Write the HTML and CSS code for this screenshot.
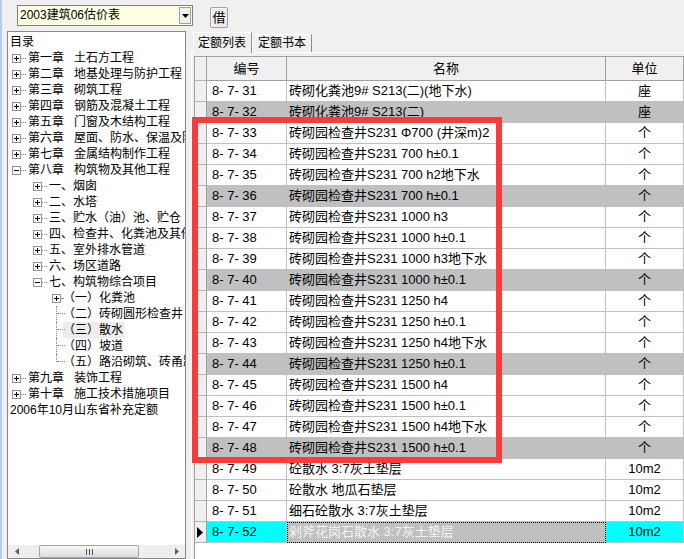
FILE: index.html
```html
<!DOCTYPE html>
<html lang="zh">
<head>
<meta charset="utf-8">
<title>定额列表</title>
<link rel="stylesheet" href="styles.css">
</head>
<body>
<div class="app">
  <div class="toolbar">
    <div class="combo">
      <span class="combo-text">2003建筑06估价表</span>
      <span class="combo-btn"><svg width="7" height="4" viewBox="0 0 7 4"><path d="M0 0h7L3.5 4z" fill="#000"/></svg></span>
    </div>
    <div class="btn">借</div>
  </div>
  <div class="main">
    <div class="tree">
      <div class="tree-list">
        <div class="ti l0"><span class="lbl">目录</span></div>
        <div class="ti l1"><svg class="box" width="9" height="9"><rect x="0.5" y="0.5" width="8" height="8" fill="#fff" stroke="#919191"/><path d="M2 4.5h5M4.5 2v5" stroke="#000"/></svg><span class="tail"></span><span class="ch">第一章</span><span class="lbl">土石方工程</span></div>
        <div class="ti l1"><svg class="box" width="9" height="9"><rect x="0.5" y="0.5" width="8" height="8" fill="#fff" stroke="#919191"/><path d="M2 4.5h5M4.5 2v5" stroke="#000"/></svg><span class="tail"></span><span class="ch">第二章</span><span class="lbl">地基处理与防护工程</span></div>
        <div class="ti l1"><svg class="box" width="9" height="9"><rect x="0.5" y="0.5" width="8" height="8" fill="#fff" stroke="#919191"/><path d="M2 4.5h5M4.5 2v5" stroke="#000"/></svg><span class="tail"></span><span class="ch">第三章</span><span class="lbl">砌筑工程</span></div>
        <div class="ti l1"><svg class="box" width="9" height="9"><rect x="0.5" y="0.5" width="8" height="8" fill="#fff" stroke="#919191"/><path d="M2 4.5h5M4.5 2v5" stroke="#000"/></svg><span class="tail"></span><span class="ch">第四章</span><span class="lbl">钢筋及混凝土工程</span></div>
        <div class="ti l1"><svg class="box" width="9" height="9"><rect x="0.5" y="0.5" width="8" height="8" fill="#fff" stroke="#919191"/><path d="M2 4.5h5M4.5 2v5" stroke="#000"/></svg><span class="tail"></span><span class="ch">第五章</span><span class="lbl">门窗及木结构工程</span></div>
        <div class="ti l1"><svg class="box" width="9" height="9"><rect x="0.5" y="0.5" width="8" height="8" fill="#fff" stroke="#919191"/><path d="M2 4.5h5M4.5 2v5" stroke="#000"/></svg><span class="tail"></span><span class="ch">第六章</span><span class="lbl">屋面、防水、保温及防腐工程</span></div>
        <div class="ti l1"><svg class="box" width="9" height="9"><rect x="0.5" y="0.5" width="8" height="8" fill="#fff" stroke="#919191"/><path d="M2 4.5h5M4.5 2v5" stroke="#000"/></svg><span class="tail"></span><span class="ch">第七章</span><span class="lbl">金属结构制作工程</span></div>
        <div class="ti l1"><svg class="box" width="9" height="9"><rect x="0.5" y="0.5" width="8" height="8" fill="#fff" stroke="#919191"/><path d="M2 4.5h5" stroke="#000"/></svg><span class="tail"></span><span class="ch">第八章</span><span class="lbl">构筑物及其他工程</span></div>
        <div class="ti l2"><svg class="box" width="9" height="9"><rect x="0.5" y="0.5" width="8" height="8" fill="#fff" stroke="#919191"/><path d="M2 4.5h5M4.5 2v5" stroke="#000"/></svg><span class="tail"></span><span class="lbl">一、烟囱</span></div>
        <div class="ti l2"><svg class="box" width="9" height="9"><rect x="0.5" y="0.5" width="8" height="8" fill="#fff" stroke="#919191"/><path d="M2 4.5h5M4.5 2v5" stroke="#000"/></svg><span class="tail"></span><span class="lbl">二、水塔</span></div>
        <div class="ti l2"><svg class="box" width="9" height="9"><rect x="0.5" y="0.5" width="8" height="8" fill="#fff" stroke="#919191"/><path d="M2 4.5h5M4.5 2v5" stroke="#000"/></svg><span class="tail"></span><span class="lbl">三、贮水（油）池、贮仓</span></div>
        <div class="ti l2"><svg class="box" width="9" height="9"><rect x="0.5" y="0.5" width="8" height="8" fill="#fff" stroke="#919191"/><path d="M2 4.5h5M4.5 2v5" stroke="#000"/></svg><span class="tail"></span><span class="lbl">四、检查井、化粪池及其他</span></div>
        <div class="ti l2"><svg class="box" width="9" height="9"><rect x="0.5" y="0.5" width="8" height="8" fill="#fff" stroke="#919191"/><path d="M2 4.5h5M4.5 2v5" stroke="#000"/></svg><span class="tail"></span><span class="lbl">五、室外排水管道</span></div>
        <div class="ti l2"><svg class="box" width="9" height="9"><rect x="0.5" y="0.5" width="8" height="8" fill="#fff" stroke="#919191"/><path d="M2 4.5h5M4.5 2v5" stroke="#000"/></svg><span class="tail"></span><span class="lbl">六、场区道路</span></div>
        <div class="ti l2"><svg class="box" width="9" height="9"><rect x="0.5" y="0.5" width="8" height="8" fill="#fff" stroke="#919191"/><path d="M2 4.5h5" stroke="#000"/></svg><span class="tail"></span><span class="lbl">七、构筑物综合项目</span></div>
        <div class="ti l3"><svg class="box" width="9" height="9"><rect x="0.5" y="0.5" width="8" height="8" fill="#fff" stroke="#919191"/><path d="M2 4.5h5M4.5 2v5" stroke="#000"/></svg><span class="tail short"></span><span class="lbl">（一）化粪池</span></div>
        <div class="ti l3"><span class="conn"></span><span class="lbl">（二）砖砌圆形检查井</span></div>
        <div class="ti l3"><span class="conn"></span><span class="lbl sel">（三）散水</span></div>
        <div class="ti l3"><span class="conn"></span><span class="lbl">（四）坡道</span></div>
        <div class="ti l3"><span class="conn last"></span><span class="lbl">（五）路沿砌筑、砖甬路</span></div>
        <div class="ti l1"><svg class="box" width="9" height="9"><rect x="0.5" y="0.5" width="8" height="8" fill="#fff" stroke="#919191"/><path d="M2 4.5h5M4.5 2v5" stroke="#000"/></svg><span class="tail"></span><span class="ch">第九章</span><span class="lbl">装饰工程</span></div>
        <div class="ti l1"><svg class="box" width="9" height="9"><rect x="0.5" y="0.5" width="8" height="8" fill="#fff" stroke="#919191"/><path d="M2 4.5h5M4.5 2v5" stroke="#000"/></svg><span class="tail"></span><span class="ch">第十章</span><span class="lbl">施工技术措施项目</span></div>
        <div class="ti l0"><span class="lbl">2006年10月山东省补充定额</span></div>
      </div>
      <div class="hscroll">
        <span class="sarrow"><svg width="4" height="7" viewBox="0 0 4 7"><path d="M4 0v7L0 3.5z" fill="#606060"/></svg></span>
        <span class="track"><span class="thumb"><svg width="9" height="6" viewBox="0 0 9 6"><path d="M1.5 0v6M4.5 0v6M7.5 0v6" stroke="#505050"/></svg></span></span>
        <span class="sarrow"><svg width="4" height="7" viewBox="0 0 4 7"><path d="M0 0v7L4 3.5z" fill="#606060"/></svg></span>
      </div>
    </div>
    <div class="tabs-area">
      <div class="tabstrip">
        <div class="tab active">定额列表</div>
        <div class="tab">定额书本</div>
      </div>
      <div class="panel">
        <div class="grid">
          <div class="row hdr"><div class="c ind"></div><div class="c">编号</div><div class="c">名称</div><div class="c">单位</div></div>
          <div class="row"><div class="c ind"></div><div class="c code">8- 7- 31</div><div class="c name">砖砌化粪池9# S213(二)(地下水)</div><div class="c unit">座</div></div>
          <div class="row alt"><div class="c ind"></div><div class="c code">8- 7- 32</div><div class="c name">砖砌化粪池9# S213(二)</div><div class="c unit">座</div></div>
          <div class="row"><div class="c ind"></div><div class="c code">8- 7- 33</div><div class="c name">砖砌园检查井S231 Φ700 (井深m)2</div><div class="c unit">个</div></div>
          <div class="row"><div class="c ind"></div><div class="c code">8- 7- 34</div><div class="c name">砖砌园检查井S231 700 h±0.1</div><div class="c unit">个</div></div>
          <div class="row"><div class="c ind"></div><div class="c code">8- 7- 35</div><div class="c name">砖砌园检查井S231 700 h2地下水</div><div class="c unit">个</div></div>
          <div class="row alt"><div class="c ind"></div><div class="c code">8- 7- 36</div><div class="c name">砖砌园检查井S231 700 h±0.1</div><div class="c unit">个</div></div>
          <div class="row"><div class="c ind"></div><div class="c code">8- 7- 37</div><div class="c name">砖砌园检查井S231 1000 h3</div><div class="c unit">个</div></div>
          <div class="row"><div class="c ind"></div><div class="c code">8- 7- 38</div><div class="c name">砖砌园检查井S231 1000 h±0.1</div><div class="c unit">个</div></div>
          <div class="row"><div class="c ind"></div><div class="c code">8- 7- 39</div><div class="c name">砖砌园检查井S231 1000 h3地下水</div><div class="c unit">个</div></div>
          <div class="row alt"><div class="c ind"></div><div class="c code">8- 7- 40</div><div class="c name">砖砌园检查井S231 1000 h±0.1</div><div class="c unit">个</div></div>
          <div class="row"><div class="c ind"></div><div class="c code">8- 7- 41</div><div class="c name">砖砌园检查井S231 1250 h4</div><div class="c unit">个</div></div>
          <div class="row"><div class="c ind"></div><div class="c code">8- 7- 42</div><div class="c name">砖砌园检查井S231 1250 h±0.1</div><div class="c unit">个</div></div>
          <div class="row"><div class="c ind"></div><div class="c code">8- 7- 43</div><div class="c name">砖砌园检查井S231 1250 h4地下水</div><div class="c unit">个</div></div>
          <div class="row alt"><div class="c ind"></div><div class="c code">8- 7- 44</div><div class="c name">砖砌园检查井S231 1250 h±0.1</div><div class="c unit">个</div></div>
          <div class="row"><div class="c ind"></div><div class="c code">8- 7- 45</div><div class="c name">砖砌园检查井S231 1500 h4</div><div class="c unit">个</div></div>
          <div class="row"><div class="c ind"></div><div class="c code">8- 7- 46</div><div class="c name">砖砌园检查井S231 1500 h±0.1</div><div class="c unit">个</div></div>
          <div class="row"><div class="c ind"></div><div class="c code">8- 7- 47</div><div class="c name">砖砌园检查井S231 1500 h4地下水</div><div class="c unit">个</div></div>
          <div class="row alt"><div class="c ind"></div><div class="c code">8- 7- 48</div><div class="c name">砖砌园检查井S231 1500 h±0.1</div><div class="c unit">个</div></div>
          <div class="row"><div class="c ind"></div><div class="c code">8- 7- 49</div><div class="c name">砼散水 3:7灰土垫层</div><div class="c unit">10m2</div></div>
          <div class="row"><div class="c ind"></div><div class="c code">8- 7- 50</div><div class="c name">砼散水 地瓜石垫层</div><div class="c unit">10m2</div></div>
          <div class="row"><div class="c ind"></div><div class="c code">8- 7- 51</div><div class="c name">细石砼散水 3:7灰土垫层</div><div class="c unit">10m2</div></div>
          <div class="row cur"><div class="c ind"><svg width="6" height="11" viewBox="0 0 6 11"><path d="M0 0L6 5.5L0 11z" fill="#000"/></svg></div><div class="c code">8- 7- 52</div><div class="c name">剁斧花岗石散水 3:7灰土垫层</div><div class="c unit">10m2</div></div>
        </div>
      </div>
    </div>
  </div>
  <div class="mark"></div>
</div>
</body>
</html>
```

FILE: styles.css
```css
* { box-sizing: border-box; }
html, body { margin: 0; padding: 0; }
body {
  width: 684px;
  height: 559px;
  overflow: hidden;
  background: #f0f0f0;
  font-family: "Liberation Sans", "Noto Sans CJK SC", sans-serif;
  font-size: 12px;
  color: #000;
}
.app {
  position: relative;
  height: 559px;
  border-left: 2px solid #b4cff0;
  display: flex;
  flex-direction: column;
}

/* toolbar */
.toolbar {
  height: 31px;
  flex: none;
  display: flex;
  align-items: flex-start;
  padding: 5px 0 0 15px;
}
.combo {
  width: 176px;
  height: 21px;
  border: 1px solid #7f7f7f;
  background: #ffffe1;
  display: flex;
}
.combo-text {
  flex: 1;
  padding-left: 2px;
  line-height: 19px;
  white-space: nowrap;
}
.combo-btn {
  width: 12px;
  margin: 1px 1px 1px 0;
  background: #f0f0f0;
  border: 1px solid #a0a0a0;
  display: flex;
  align-items: center;
  justify-content: center;
}
.combo-btn svg { display: block; }
.btn {
  margin: 2px 0 0 17px;
  width: 18px;
  height: 21px;
  border: 1px solid #a0a0a0;
  border-radius: 2px;
  background: #ececec;
  box-shadow: inset 1px 1px 0 #fff;
  font-size: 13px;
  line-height: 19px;
  text-align: center;
}

/* main split */
.main {
  flex: 1;
  display: flex;
  min-height: 0;
}

/* tree */
.tree {
  margin-left: 5px;
  width: 179px;
  height: 528px;
  border: 1px solid #828790;
  background: #fff;
  display: flex;
  flex-direction: column;
  overflow: hidden;
}
.tree-list {
  flex: 1;
  padding-top: 2px;
  overflow: hidden;
}
.ti {
  display: flex;
  align-items: center;
  height: 16px;
  white-space: nowrap;
  line-height: 16px;
}
.l0 { padding-left: 2px; }
.l1 { padding-left: 4px; }
.l2 { padding-left: 25px; }
.l3 { padding-left: 44px; }
.box { display: block; flex: none; shape-rendering: crispEdges; }
.tail {
  flex: none;
  width: 5px;
  height: 1px;
  border-top: 1px dotted #8a8a8a;
  margin-right: 2px;
}
.tail.short { width: 2px; margin-right: 0; }
.conn {
  flex: none;
  position: relative;
  align-self: flex-start;
  width: 7px;
  height: 16px;
  margin-left: 4px;
  border-left: 1px dotted #8a8a8a;
}
.conn.last { height: 8px; }
.conn::after {
  content: "";
  position: absolute;
  left: 0;
  top: 7px;
  width: 8px;
  border-top: 1px dotted #8a8a8a;
}
.ch { margin-right: 10px; }
.lbl { display: block; }
.lbl.sel { background: #ececec; padding-right: 1px; }

/* scrollbar */
.hscroll {
  flex: none;
  height: 13px;
  display: flex;
  background: #eeeeee;
}
.sarrow {
  width: 17px;
  display: flex;
  align-items: center;
  justify-content: center;
}
.sarrow svg { display: block; }
.track {
  flex: 1;
  padding-left: 14px;
  display: flex;
}
.thumb {
  width: 100px;
  height: 13px;
  border: 1px solid #a4a4a4;
  border-radius: 2px;
  background: linear-gradient(#f6f6f6, #dcdcdc);
  display: flex;
  align-items: center;
  justify-content: center;
}
.thumb svg { display: block; }

/* tabs */
.tabs-area {
  margin-left: 5px;
  flex: 1;
  min-width: 0;
  display: flex;
  flex-direction: column;
}
.tabstrip {
  height: 21px;
  flex: none;
  display: flex;
  align-items: flex-end;
  padding-left: 2px;
}
.tab {
  width: 60px;
  height: 18px;
  border: 1px solid #fff;
  border-right-color: #8c8c8c;
  border-bottom: none;
  background: #f0f0f0;
  padding-left: 5px;
  line-height: 17px;
  white-space: nowrap;
}
.tab.active {
  position: relative;
  z-index: 1;
  width: 59px;
  height: 21px;
  margin-bottom: -1px;
  padding-left: 4px;
  line-height: 20px;
}
.panel {
  flex: 1;
  min-height: 0;
  display: flex;
  flex-direction: column;
  border-top: 1px solid #fff;
  border-left: 1px solid #fff;
  padding: 3px 0 0 2px;
}

/* grid */
.grid {
  flex: 1;
  background: #fff;
  border-left: 1px solid #a0a0a0;
  border-top: 1px solid #a0a0a0;
  overflow: hidden;
}
.row {
  display: grid;
  grid-template-columns: 12px 80px 319px 1fr;
  height: 21px;
}
.row.hdr { height: 24px; }
.c {
  border-right: 1px solid #c0c0c0;
  border-bottom: 1px solid #c0c0c0;
  overflow: hidden;
  white-space: nowrap;
  font-size: 13px;
  line-height: 20px;
}
.hdr .c {
  background: #f0f0f0;
  border-color: #a0a0a0;
  text-align: center;
  line-height: 23px;
}
.c.ind {
  background: #f0f0f0;
  border-right-color: #a0a0a0;
  border-bottom-color: #b4b4b4;
  display: flex;
  align-items: center;
  padding-left: 2px;
}
.ind svg { display: block; }
.code { padding-left: 5px; }
.name { padding-left: 2px; }
.unit { text-align: center; }
.row.alt .code, .row.alt .name, .row.alt .unit { background: #c0c0c0; }
.row.cur .code, .row.cur .unit { background: #00ffff; }
.row.cur .name {
  background: #c0c0c0;
  color: #f4f4f4;
  border: 1px dotted #000;
  padding-left: 1px;
  line-height: 18px;
}

/* annotation box */
.mark {
  position: absolute;
  left: 190px;
  top: 117px;
  width: 310px;
  height: 346px;
  border: 6px solid #fb3b3b;
  pointer-events: none;
}
```
